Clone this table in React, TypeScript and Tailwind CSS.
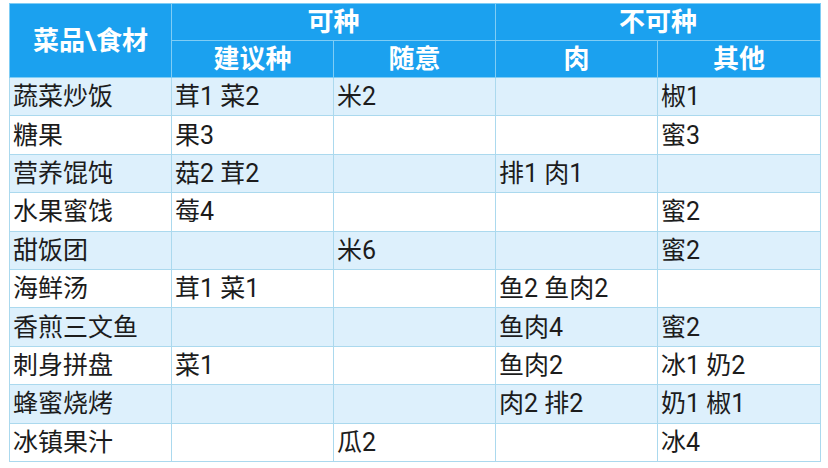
const rows: string[][] = [
  ['蔬菜炒饭', '茸1 菜2', '米2', '', '椒1'],
  ['糖果', '果3', '', '', '蜜3'],
  ['营养馄饨', '菇2 茸2', '', '排1 肉1', ''],
  ['水果蜜饯', '莓4', '', '', '蜜2'],
  ['甜饭团', '', '米6', '', '蜜2'],
  ['海鲜汤', '茸1 菜1', '', '鱼2 鱼肉2', ''],
  ['香煎三文鱼', '', '', '鱼肉4', '蜜2'],
  ['刺身拼盘', '菜1', '', '鱼肉2', '冰1 奶2'],
  ['蜂蜜烧烤', '', '', '肉2 排2', '奶1 椒1'],
  ['冰镇果汁', '', '瓜2', '', '冰4'],
]

export default function App() {
  return (
    <div
      className="w-[828px] h-[468px] bg-white pt-[3px] pl-[9px]"
      style={{ fontFamily: 'Roboto, "Noto Sans CJK SC", sans-serif' }}
    >
      <table className="border-collapse table-fixed w-[811px] border border-[#b9d6e2]">
        <colgroup>
          <col className="w-[162px]" />
          <col className="w-[162px]" />
          <col className="w-[162px]" />
          <col className="w-[162px]" />
          <col className="w-[163px]" />
        </colgroup>
        <thead className="bg-[#1ba1ef] text-white font-bold text-[26px] leading-none">
          <tr className="h-[37px]">
            <th rowSpan={2} className="border border-[#7fcdf5] text-center">菜品\食材</th>
            <th colSpan={2} className="border border-[#7fcdf5] text-center">可种</th>
            <th colSpan={2} className="border border-[#7fcdf5] text-center">不可种</th>
          </tr>
          <tr className="h-[37px]">
            <th className="border border-[#7fcdf5] text-center">建议种</th>
            <th className="border border-[#7fcdf5] text-center">随意</th>
            <th className="border border-[#7fcdf5] text-center">肉</th>
            <th className="border border-[#7fcdf5] text-center">其他</th>
          </tr>
        </thead>
        <tbody className="text-[25px] leading-none text-[#1c1c1c]">
          {rows.map((r, i) => (
            <tr key={i} className={`h-[38.4px] ${i % 2 === 0 ? 'bg-[#ddf0fc]' : 'bg-white'}`}>
              {r.map((c, j) => (
                <td key={j} className="border border-[#abd9ee] px-[3px] text-left whitespace-nowrap">
                  {c}
                </td>
              ))}
            </tr>
          ))}
        </tbody>
      </table>
    </div>
  )
}
